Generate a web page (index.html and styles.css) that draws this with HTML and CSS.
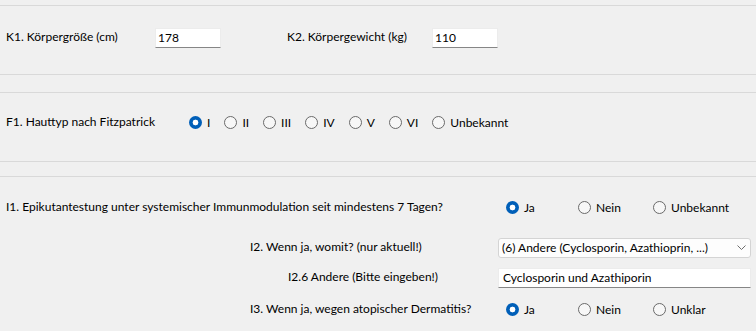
FILE: index.html
```html
<!DOCTYPE html>
<html>
<head>
    <meta charset="utf-8">
    <title>Anamnese</title>
    <link rel="stylesheet" href="styles.css">
</head>
<body>
    <div class="form">
        <section class="panel panel-k">
            <div class="row">
                <label class="label label-k1" for="groesse">K1. Körpergröße (cm)</label>
                <input id="groesse" class="field field-short" type="text" value="178">
                <label class="label label-k2" for="gewicht">K2. Körpergewicht (kg)</label>
                <input id="gewicht" class="field field-short" type="text" value="110">
            </div>
        </section>

        <section class="panel panel-f">
            <div class="row">
                <span class="label label-f1">F1. Hauttyp nach Fitzpatrick</span>
                <div class="choices choices-inline">
                    <label class="option"><input type="radio" name="hauttyp" checked> I</label>
                    <label class="option"><input type="radio" name="hauttyp"> II</label>
                    <label class="option"><input type="radio" name="hauttyp"> III</label>
                    <label class="option"><input type="radio" name="hauttyp"> IV</label>
                    <label class="option"><input type="radio" name="hauttyp"> V</label>
                    <label class="option"><input type="radio" name="hauttyp"> VI</label>
                    <label class="option"><input type="radio" name="hauttyp"> Unbekannt</label>
                </div>
            </div>
        </section>

        <section class="panel panel-i">
            <div class="row row-i1">
                <span class="label label-wide">I1. Epikutantestung unter systemischer Immunmodulation seit mindestens 7 Tagen?</span>
                <div class="choices choices-grid">
                    <label class="option"><input type="radio" name="epikutan" checked> Ja</label>
                    <label class="option"><input type="radio" name="epikutan"> Nein</label>
                    <label class="option"><input type="radio" name="epikutan"> Unbekannt</label>
                </div>
            </div>
            <div class="row row-i2">
                <label class="label label-wide indent" for="womit">I2. Wenn ja, womit? (nur aktuell!)</label>
                <div class="select-wrap">
                    <select id="womit" class="select">
                        <option>(6) Andere (Cyclosporin, Azathioprin, ...)</option>
                    </select>
                    <svg class="chevron" width="9" height="5" viewBox="0 0 9 5">
                        <path d="M0.5 0.5 L4.5 4.5 L8.5 0.5" fill="none" stroke="#6e6e6e" stroke-width="1"/>
                    </svg>
                </div>
            </div>
            <div class="row row-i26">
                <label class="label label-wide indent-deep" for="andere">I2.6 Andere (Bitte eingeben!)</label>
                <input id="andere" class="field field-long" type="text" value="Cyclosporin und Azathiporin">
            </div>
            <div class="row row-i3">
                <span class="label label-wide indent">I3. Wenn ja, wegen atopischer Dermatitis?</span>
                <div class="choices choices-grid">
                    <label class="option"><input type="radio" name="atopisch" checked> Ja</label>
                    <label class="option"><input type="radio" name="atopisch"> Nein</label>
                    <label class="option"><input type="radio" name="atopisch"> Unklar</label>
                </div>
            </div>
        </section>
    </div>
</body>
</html>
```

FILE: styles.css
```css
body {
    margin: 0;
    background: #f0f0f0;
    color: #000;
    font-family: Lato, "Noto Sans", sans-serif;
    font-size: 12px;
}
.form {
    width: 756px;
    height: 331px;
    overflow: hidden;
}
.panel {
    border-top: 1px solid #d9d9d9;
    border-bottom: 1px solid #d9d9d9;
    padding-left: 6px;
}
.panel-k {
    margin-top: 5px;
    padding-top: 22px;
    padding-bottom: 26px;
}
.panel-f {
    margin-top: 17px;
    padding-top: 20px;
    padding-bottom: 28px;
}
.panel-i {
    margin-top: 14px;
    padding-top: 21px;
    border-bottom: none;
}
.row {
    display: flex;
    align-items: center;
    height: 20px;
}
.label {
    flex: none;
    white-space: nowrap;
    padding-bottom: 3px;
}
.label-k1 {
    width: 149px;
}
.label-k2 {
    width: 145px;
    margin-left: 66px;
}
.label-f1 {
    width: 183px;
}
.label-wide {
    width: 492px;
    box-sizing: border-box;
}
.indent {
    padding-left: 244px;
}
.indent-deep {
    padding-left: 282px;
}

.field {
    box-sizing: border-box;
    height: 20px;
    margin: 0;
    padding: 0 2px 1px;
    border: 1px solid #ececec;
    border-bottom-color: #868686;
    background: #fff;
    font: inherit;
    color: #000;
    outline: none;
}
.field-short {
    width: 66px;
}
.field-long {
    width: 253px;
    padding-left: 4px;
}

.select-wrap {
    position: relative;
    width: 253px;
    height: 20px;
}
.select {
    appearance: none;
    box-sizing: border-box;
    width: 100%;
    height: 20px;
    margin: 0;
    padding: 0 20px 1px 3px;
    border: 1px solid #d4d4d4;
    border-radius: 3px;
    background: #fdfdfd;
    font: inherit;
    color: #000;
}
.chevron {
    position: absolute;
    right: 5px;
    top: 7px;
}

.row-i2 {
    margin-top: 20px;
}
.row-i26 {
    margin-top: 10px;
}
.row-i3 {
    margin-top: 12px;
}

.choices-inline {
    display: flex;
}
.choices-inline .option {
    margin-right: 14px;
}
.choices-grid {
    display: grid;
    grid-template-columns: 72px 75px auto;
    padding-left: 8px;
}
.option {
    display: inline-flex;
    align-items: center;
    gap: 5px;
    white-space: nowrap;
    padding-bottom: 2px;
}
.option input {
    margin-top: 2px;
}
input[type="radio"] {
    appearance: none;
    box-sizing: border-box;
    width: 13px;
    height: 13px;
    margin: 0;
    border: 1px solid #6a6a6a;
    border-radius: 50%;
    background: #f7f7f7;
}
input[type="radio"]:checked {
    border: none;
    background: radial-gradient(circle, #fff 0 2.6px, #005fb8 3.2px);
}
```
